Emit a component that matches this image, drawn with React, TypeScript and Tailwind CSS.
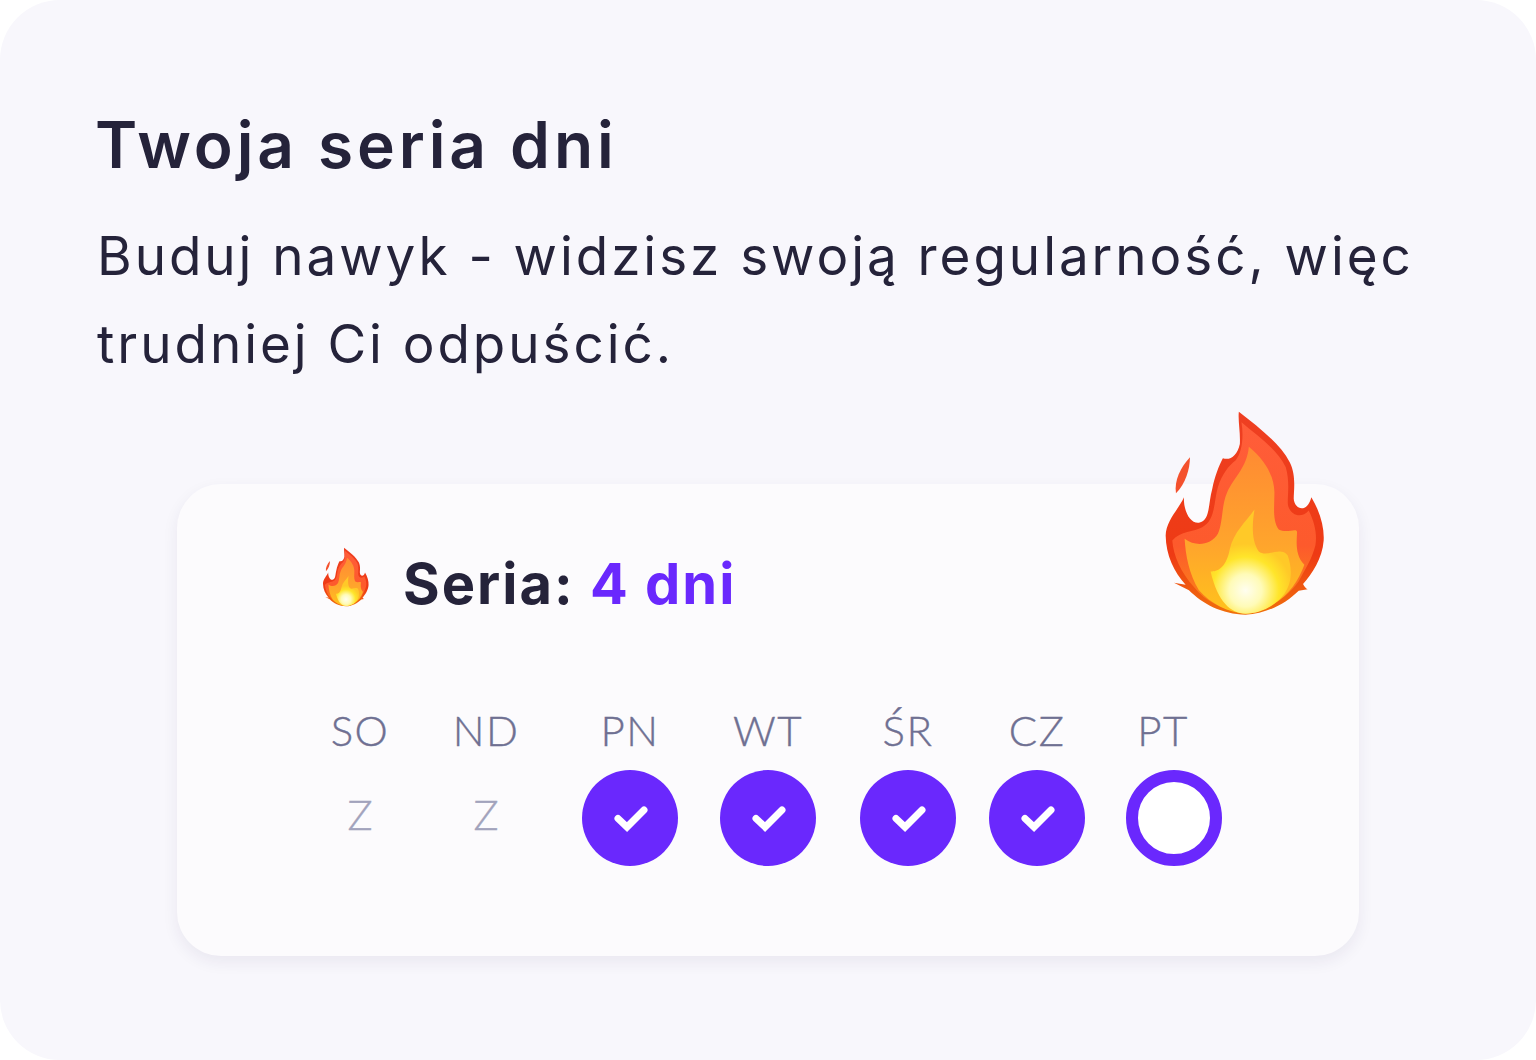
import React from "react";

const days = [
  { label: "SO", done: null, className: "w-[62px] ml-[0px]", labelClass: "" },
  { label: "ND", done: null, className: "w-[62px] ml-[64px]", labelClass: "" },
  { label: "PN", done: true, className: "w-[96px] ml-[65px]", labelClass: "" },
  { label: "WT", done: true, className: "w-[96px] ml-[42px]", labelClass: "" },
  { label: "ŚR", done: true, className: "w-[96px] ml-[44px]", labelClass: "" },
  { label: "CZ", done: true, className: "w-[96px] ml-[33px]", labelClass: "" },
  { label: "PT", done: false, className: "w-[96px] ml-[41px]", labelClass: "-translate-x-[11px]" },
];

const Flame = ({ id, className }: { id: string; className: string }) => (
  <svg viewBox="100 30 490 625" className={className} aria-hidden="true">
    <defs>
      <radialGradient id={`${id}-core`} cx="345" cy="575" r="140" gradientUnits="userSpaceOnUse">
        <stop offset="0" stopColor="#fffef0" />
        <stop offset="0.35" stopColor="#fffbb8" />
        <stop offset="0.72" stopColor="#ffe52a" />
        <stop offset="1" stopColor="#ffc928" />
      </radialGradient>
      <linearGradient id={`${id}-mid`} x1="0" y1="143" x2="0" y2="640" gradientUnits="userSpaceOnUse">
        <stop offset="0" stopColor="#ff8a33" />
        <stop offset="0.6" stopColor="#ffa52c" />
        <stop offset="1" stopColor="#ffc21c" />
      </linearGradient>
      <linearGradient id={`${id}-outer`} x1="0" y1="38" x2="0" y2="650" gradientUnits="userSpaceOnUse">
        <stop offset="0" stopColor="#ee3f22" />
        <stop offset="0.7" stopColor="#ee3a14" />
        <stop offset="1" stopColor="#f0700c" />
      </linearGradient>
      <linearGradient id={`${id}-inner`} x1="0" y1="70" x2="0" y2="640" gradientUnits="userSpaceOnUse">
        <stop offset="0" stopColor="#ff5d3a" />
        <stop offset="0.65" stopColor="#fd5a2c" />
        <stop offset="1" stopColor="#f98a14" />
      </linearGradient>
    </defs>
    <path d="M178 175C178 210 165 255 136 283C130 245 150 205 178 175Z" fill="#f4512d" />
    <path
      d="M325 38C385 85 450 135 478 190C498 230 490 275 490 300C492 332 530 345 543 295C570 340 582 385 580 425C576 480 545 525 518 556C522 565 528 570 532 572L505 576C465 615 410 645 345 648C275 648 215 615 175 575L130 552L165 558C130 520 106 470 105 410C106 365 145 330 160 295C158 335 178 375 205 372C240 365 232 315 245 270C252 235 265 200 277 178C300 185 320 170 328 135C330 100 322 65 325 38Z"
      fill={`url(#${id}-outer)`}
    />
    <path
      d="M333 70C385 115 440 150 466 205C478 245 472 285 472 310C472 345 510 365 535 335C555 375 560 410 555 440C545 480 525 510 505 548C460 610 400 638 345 642C285 638 225 610 190 565C150 520 128 470 125 425C150 395 190 400 215 385C255 365 250 305 262 265C275 225 295 200 315 185C335 160 340 115 333 70Z"
      fill={`url(#${id}-inner)`}
    />
    <path
      d="M355 143C400 180 430 225 432 280C432 320 425 365 445 392C470 405 500 385 500 400C498 435 495 470 522 498C505 545 475 590 430 615C400 635 375 645 345 645C295 643 240 615 205 575C175 525 165 470 162 420C195 445 240 440 262 405C278 370 272 320 290 280C310 235 350 205 355 143Z"
      fill={`url(#${id}-mid)`}
    />
    <path
      d="M372 332C365 375 362 425 385 458C410 478 450 440 472 470C482 500 490 545 462 585C435 622 390 645 345 645C300 643 262 610 240 518C262 520 288 505 298 450C310 400 345 370 372 332Z"
      fill={`url(#${id}-core)`}
    />
  </svg>
);

const Check = () => (
  <svg viewBox="0 0 34 28" className="w-[34px] h-[28px] translate-x-[1px] translate-y-[1px]" aria-hidden="true">
    <path
      d="M4 13.5L13 22L30 5"
      fill="none"
      stroke="#ffffff"
      strokeWidth="7"
      strokeLinecap="round"
      strokeLinejoin="miter"
    />
  </svg>
);

export default function App() {
  return (
    <div className="w-[1536px] h-[1060px] bg-white overflow-hidden">
      <div className="h-full rounded-[60px] bg-[#f8f7fc] pt-[106px] pl-[97px] font-['Inter',sans-serif] text-[#25233a]">
        <h1 className="-ml-[2px] text-[64px] leading-[78px] font-semibold tracking-[3.9px]">Twoja seria dni</h1>
        <p className="mt-[28px] w-[1400px] text-[53px] leading-[88px] tracking-[2.95px]">
          Buduj nawyk - widzisz swoją regularność, więc
          <br />
          trudniej Ci odpuścić.
        </p>

        <div className="relative mt-[96px] ml-[80px] w-[1182px] h-[472px] rounded-[44px] bg-[#fcfbfd] shadow-[0_6px_16px_rgba(40,35,80,0.07)] pt-[63px] pl-[145px]">
          <Flame id="flame-big" className="absolute left-[987px] top-[-75px] w-[163px] h-[208px]" />

          <div className="flex items-center h-[60px]">
            <Flame id="flame-small" className="w-[48px] h-[60px]" />
            <span className="ml-[33px] mt-[14px] text-[56px] leading-[70px] font-bold tracking-[2px]">
              Seria: <span className="text-[#6a28fd]">4 dni</span>
            </span>
          </div>

          <div className="flex mt-[98px] pl-[7px] font-['Lato',sans-serif]">
            {days.map((day) => (
              <div key={day.label} className={`flex flex-col items-center ${day.className}`}>
                <span className={`text-[42px] leading-[50px] font-light tracking-[1.5px] [-webkit-text-stroke:0.4px] text-[#6f7092] whitespace-nowrap ${day.labelClass}`}>
                  {day.label}
                </span>
                {day.done === null ? (
                  <span className="mt-[34px] text-[42px] leading-[50px] font-light [-webkit-text-stroke:0.4px] text-[#a2a3bc]">Z</span>
                ) : day.done ? (
                  <span className="mt-[15px] w-[96px] h-[96px] rounded-full bg-[#6a28fd] flex items-center justify-center">
                    <Check />
                  </span>
                ) : (
                  <span className="mt-[15px] w-[96px] h-[96px] rounded-full border-[12px] border-[#6a28fd] bg-white" />
                )}
              </div>
            ))}
          </div>
        </div>
      </div>
    </div>
  );
}
